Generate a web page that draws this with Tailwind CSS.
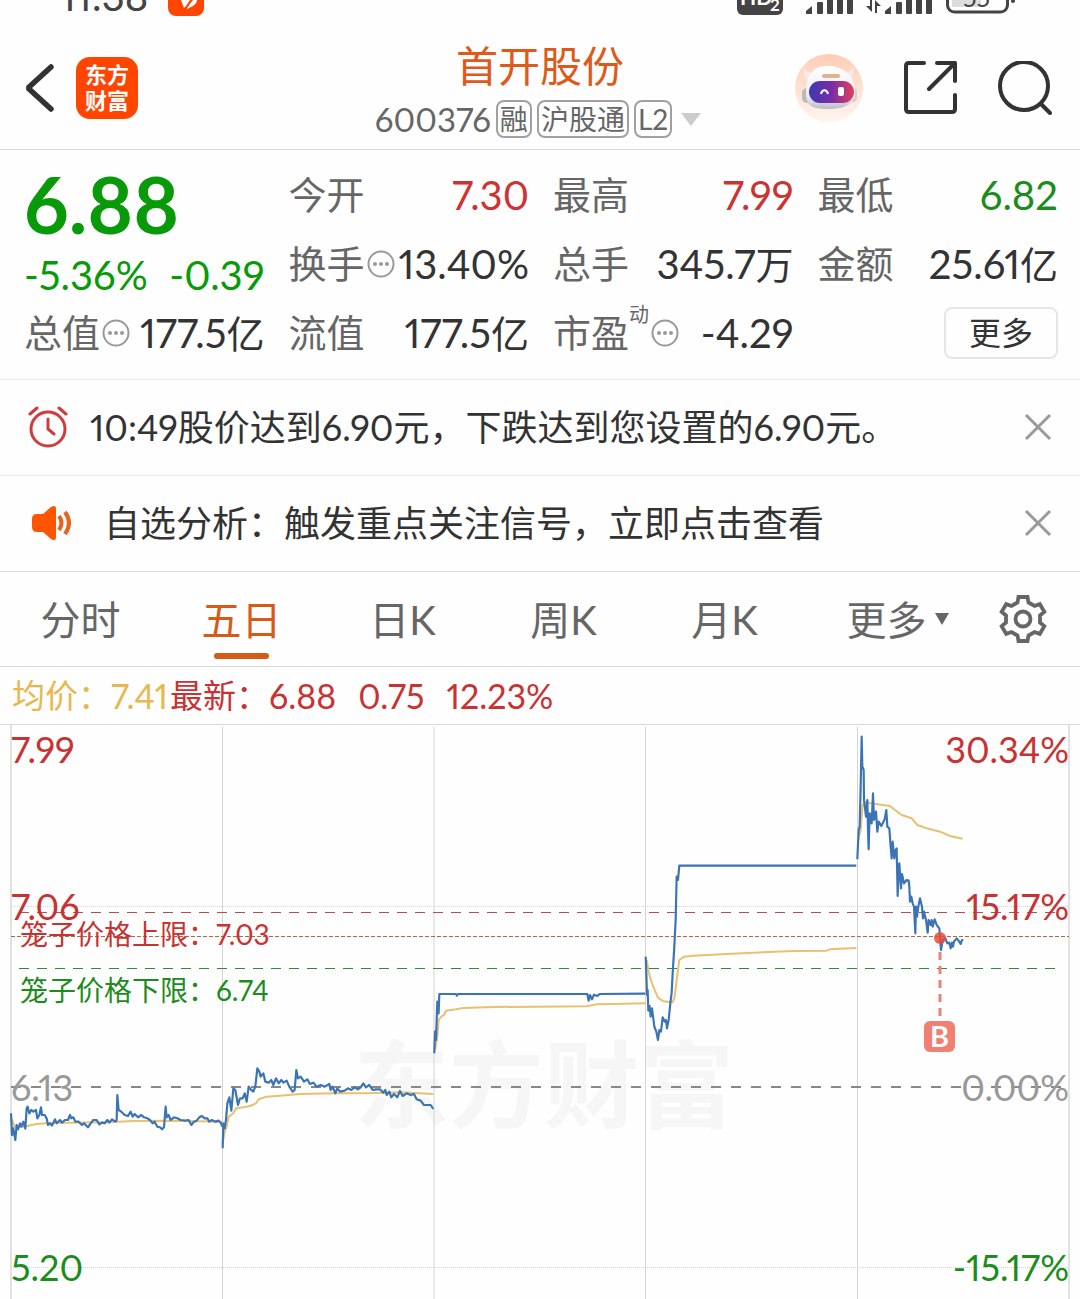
<!DOCTYPE html>
<html lang="zh-CN">
<head>
<meta charset="utf-8">
<meta name="viewport" content="width=device-width, initial-scale=1">
<title>首开股份 600376</title>
<script src="https://cdn.jsdelivr.net/npm/@tailwindcss/browser@4"></script>
</head>
<body class="bg-[#fefefe] text-[#333] font-['Lato','Noto_Sans_CJK_SC',sans-serif] proportional-nums overflow-x-hidden">

<!-- Status bar -->
<div class="h-6 overflow-hidden flex justify-between items-start pl-15 pr-16 text-[#444]">
  <div class="flex items-start gap-5">
    <span class="text-[40px] leading-10 h-4 flex items-end">11:38</span>
    <svg class="w-9 h-4" viewBox="0 0 36 16" aria-hidden="true"><rect y="-20" width="36" height="36" rx="8" fill="#ff4500"/><path d="M13 0h9l-4 6-2 2zM19 8l6-8h4q0 3-4 6l-6 3z" fill="#fff"/></svg>
  </div>
  <svg class="w-[279px] h-4 shrink-0" viewBox="737 0 279 16" aria-hidden="true">
    <rect x="737" y="-20" width="46" height="35" rx="6" fill="#444"/>
    <text x="740" y="5" font-size="21" font-weight="700" fill="#fff">HD</text><text x="770" y="11" font-size="17" font-weight="700" fill="#fff">2</text>
    <g fill="#444"><path d="M806 14v-3l6-5v8z"/><rect x="817" y="2" width="6" height="12" rx="1"/><rect x="827" y="-3" width="6" height="17" rx="1"/><rect x="837" y="-3" width="6" height="17" rx="1"/><rect x="847" y="-3" width="6" height="17" rx="1"/>
    <path d="M866 6h4V-3h2v15zM881 6h-4v7h-2V0z"/>
    <path d="M885 14v-3l6-5v8z"/><rect x="896" y="2" width="6" height="12" rx="1"/><rect x="906" y="-3" width="6" height="17" rx="1"/><rect x="916" y="-3" width="6" height="17" rx="1"/><rect x="926" y="-3" width="6" height="17" rx="1"/><circle cx="1013" cy="1" r="2"/></g>
    <rect x="952" y="-10" width="29" height="17" fill="#ddd"/>
    <rect x="947.500" y="-20" width="60" height="32" rx="7" fill="none" stroke="#444" stroke-width="3"/>
    <text x="963" y="7" font-size="25" fill="#444">55</text>
  </svg>
</div>

<!-- Title bar -->
<header class="h-[126px] border-b border-[#d8d8d8] grid grid-cols-[1fr_auto_1fr] px-6">
  <div class="flex items-center gap-5 pt-0.5">
    <button type="button" aria-label="返回" class="w-8 h-12"><svg class="w-8 h-12" viewBox="0 0 32 48" fill="none" stroke="#333" stroke-width="5.500" stroke-linecap="round" stroke-linejoin="bevel"><path d="M27 3L4 24l23 21"/></svg></button>
    <a href="#" class="w-[62px] h-[62px] rounded-[14px] bg-[#ff4500] text-white font-bold text-[22px] leading-[26px] flex flex-col items-center justify-center"><span>东方</span><span>财富</span></a>
  </div>
  <div class="pt-4 flex flex-col items-center gap-[7px]">
    <h1 class="text-[42px] leading-[52px] text-[#dd5a1a]">首开股份</h1>
    <button type="button" class="flex items-center gap-[5px] text-[28px] leading-[34px] text-[#666] h-10 pr-1">
      <span class="text-[33px]">600376</span>
      <span class="border-2 border-[#a0a0a0] rounded-lg px-[2px]">融</span>
      <span class="border-2 border-[#a0a0a0] rounded-lg px-[2px]">沪股通</span>
      <span class="border-2 border-[#a0a0a0] rounded-lg px-[2px]">L2</span>
      <svg class="w-5 h-[13px] ml-1" viewBox="0 0 20 13"><path d="M0 0h20L10 13z" fill="#ccc"/></svg>
    </button>
  </div>
  <div class="flex items-center justify-end gap-[41px] pt-0.5 pr-1">
    <button type="button" aria-label="智能助手" class="w-[68px] h-[68px]">
      <svg class="w-[68px] h-[68px]" viewBox="0 0 68 68">
        <defs><linearGradient id="bg" x2="0" y2="1"><stop stop-color="#ffcdb5"/><stop offset="1" stop-color="#fff5f0"/></linearGradient><linearGradient id="visor"><stop stop-color="#3a3bb0"/><stop offset=".5" stop-color="#7b2ba8"/><stop offset="1" stop-color="#e0405c"/></linearGradient><linearGradient id="shell" x2="0" y2="1"><stop stop-color="#fff"/><stop offset=".7" stop-color="#eeecef"/><stop offset="1" stop-color="#b9bcc8"/></linearGradient></defs>
        <circle cx="34" cy="34" r="34" fill="url(#bg)"/>
        <path d="M9 13c-1 6 0 11 5 14l6-7c-6 0-9-3-11-7zM58 13c1 6 0 11-5 14l-6-7c6 0 9-3 11-7z" fill="#f3ecea"/>
        <rect x="7" y="34" width="10" height="15" rx="5" fill="#b9b9c0"/><rect x="53" y="34" width="9" height="14" rx="4" fill="#d5d0d3"/>
        <path d="M11 38c0-17 7-26 21-26s27 7 28 25c0 12-8 18-27 18S11 50 11 38z" fill="url(#shell)"/>
        <rect x="27" y="20" width="18" height="4" rx="2" fill="#e0b090"/>
        <rect x="14" y="27" width="45" height="22" rx="11" fill="url(#visor)"/>
        <path d="M26 40c1-5 6-5 7 0" fill="none" stroke="#fff" stroke-width="2"/><rect x="43" y="33" width="6" height="9" rx="2" fill="#fff"/>
      </svg>
    </button>
    <button type="button" aria-label="分享" class="w-[53px] h-[53px]"><svg class="w-[53px] h-[53px]" viewBox="0 0 53 53" fill="none" stroke="#333" stroke-width="4" stroke-linecap="round" stroke-linejoin="round"><path d="M20 2H5q-3 0-3 3v43q0 3 3 3h43q3 0 3-3V34M33 2h18v18M51 2L25 28"/></svg></button>
    <button type="button" aria-label="搜索" class="w-[54px] h-[54px]"><svg class="w-[54px] h-[54px]" viewBox="0 0 54 54" fill="none" stroke="#333" stroke-width="4" stroke-linecap="round"><circle cx="26" cy="25" r="24"/><path d="M43 43l9 9"/></svg></button>
  </div>
</header>

<!-- Quote figures -->
<section class="pt-[10px] pb-3 pl-6 pr-[22px] border-b border-[#ececec] grid grid-cols-4 gap-x-6 auto-rows-[69px] text-[40px] text-[#333] whitespace-nowrap">
  <div class="row-span-2 text-[#089a08]">
    <p class="text-[78px] leading-[88px] font-bold">6.88</p>
    <p class="leading-[46px] pt-1 flex justify-between"><span>-5.36%</span><span>-0.39</span></p>
  </div>
  <div class="flex items-center justify-between"><span class="text-[#666] text-[38px]">今开</span><span class="text-[#cc3333]">7.30</span></div>
  <div class="flex items-center justify-between"><span class="text-[#666] text-[38px]">最高</span><span class="text-[#cc3333]">7.99</span></div>
  <div class="flex items-center justify-between"><span class="text-[#666] text-[38px]">最低</span><span class="text-[#1c8c1c]">6.82</span></div>
  <div class="flex items-center justify-between"><span class="text-[#666] text-[38px] flex items-center">换手<svg class="w-7 h-7 ml-[2px]" viewBox="0 0 28 28"><circle cx="14" cy="14" r="12.500" fill="none" stroke="#999" stroke-width="2"/><g fill="#999"><circle cx="8" cy="14" r="2"/><circle cx="14" cy="14" r="2"/><circle cx="20" cy="14" r="2"/></g></svg></span><span>13.40%</span></div>
  <div class="flex items-center justify-between"><span class="text-[#666] text-[38px]">总手</span><span>345.7<span class="text-[38px]">万</span></span></div>
  <div class="flex items-center justify-between"><span class="text-[#666] text-[38px]">金额</span><span>25.61<span class="text-[38px]">亿</span></span></div>
  <div class="flex items-center justify-between"><span class="text-[#666] text-[38px] flex items-center">总值<svg class="w-7 h-7 ml-[2px]" viewBox="0 0 28 28"><circle cx="14" cy="14" r="12.500" fill="none" stroke="#999" stroke-width="2"/><g fill="#999"><circle cx="8" cy="14" r="2"/><circle cx="14" cy="14" r="2"/><circle cx="20" cy="14" r="2"/></g></svg></span><span>177.5<span class="text-[38px]">亿</span></span></div>
  <div class="flex items-center justify-between"><span class="text-[#666] text-[38px]">流值</span><span>177.5<span class="text-[38px]">亿</span></span></div>
  <div class="flex items-center justify-between"><span class="text-[#666] text-[38px] flex items-center">市盈<span class="text-[20px] leading-5 self-start">动</span><svg class="w-7 h-7 ml-[2px]" viewBox="0 0 28 28"><circle cx="14" cy="14" r="12.500" fill="none" stroke="#999" stroke-width="2"/><g fill="#999"><circle cx="8" cy="14" r="2"/><circle cx="14" cy="14" r="2"/><circle cx="20" cy="14" r="2"/></g></svg></span><span>-4.29</span></div>
  <div class="flex items-center justify-end"><button type="button" class="w-[114px] h-[52px] border-2 border-[#e6e6e6] rounded-lg text-[32px] leading-[46px]">更多</button></div>
</section>

<!-- Alerts -->
<div class="h-24 border-b border-[#ececec] flex items-center pl-7 pr-7 pb-0.5 text-[36px]">
  <svg class="w-10 h-[42px] shrink-0" viewBox="0 0 40 42" fill="none" stroke="#d03c3c" stroke-width="3" stroke-linecap="round"><circle cx="20" cy="23" r="17"/><path d="M20 13v10l6 5M2 8l7-6M38 8l-7-6"/></svg>
  <p class="flex-1 pl-[22px] whitespace-nowrap">10:49股价达到6.90元，下跌达到您设置的6.90元。</p>
  <button type="button" aria-label="关闭提醒" class="w-7 h-7 shrink-0"><svg class="w-7 h-7" viewBox="0 0 28 28" stroke="#999" stroke-width="3"><path d="M2 2l24 24M26 2L2 26"/></svg></button>
</div>
<div class="h-24 border-b border-[#d8d8d8] flex items-center pl-8 pr-7 pb-0.5 text-[36px]">
  <svg class="w-10 h-9 shrink-0" viewBox="0 0 40 36"><path d="M5 9h6l8-7q5-3 5 2v28q0 5-5 2l-8-7H5q-5 0-5-5v-8q0-5 5-5z" fill="#ff5500"/><path d="M27 11q5 7 0 14M33 7q8 11 0 22" fill="none" stroke="#e8641c" stroke-width="4"/></svg>
  <p class="flex-1 pl-8 whitespace-nowrap">自选分析：触发重点关注信号，立即点击查看</p>
  <button type="button" aria-label="关闭分析" class="w-7 h-7 shrink-0"><svg class="w-7 h-7" viewBox="0 0 28 28" stroke="#999" stroke-width="3"><path d="M2 2l24 24M26 2L2 26"/></svg></button>
</div>

<!-- Period tabs -->
<div class="h-[95px] border-b border-[#d8d8d8] flex text-[40px] leading-[66px] text-[#666]">
  <nav class="flex-1 grid grid-cols-6 pt-[15px] text-center">
    <a href="#">分时</a>
    <a href="#" aria-current="page" class="text-[#d65a18] flex flex-col items-center">五日<span class="w-[55px] h-1.5 rounded-full bg-[#d65a18]"></span></a>
    <a href="#">日K</a>
    <a href="#">周K</a>
    <a href="#">月K</a>
    <a href="#" class="flex items-start justify-center pl-6">更多<svg class="w-3.5 h-[66px] ml-2" viewBox="0 0 14 66"><path d="M0 26h14L7 38z" fill="#666"/></svg></a>
  </nav>
  <button type="button" aria-label="设置" class="w-[114px] flex items-center justify-center"><svg class="w-12 h-12" viewBox="-24 -24 48 48" fill="none" stroke="#666" stroke-width="3.800"><path d="M-5.500-16.500L-4.500-22H4.500L5.500-16.500 11.500-13 16.800-14.900 21.300-7.100 17-3.500V3.500L21.300 7.100 16.800 14.900 11.500 13 5.500 16.500 4.500 22H-4.500L-5.500 16.500-11.500 13-16.800 14.900-21.300 7.100-17 3.500V-3.500L-21.300-7.100-16.800-14.900-11.500-13z"/><circle r="7.500"/></svg></button>
</div>

<!-- Chart summary -->
<div class="h-[58px] border-b border-[#d8d8d8] flex items-center pl-3 text-[34px] text-[#c83232] whitespace-nowrap">
  <span class="text-[#e8b850] flex items-center"><span class="text-[33px]">均价：</span>7.41</span>
  <span class="flex items-center ml-[2px]"><span class="text-[33px]">最新：</span>6.88</span>
  <span class="ml-[22px]">0.75</span>
  <span class="ml-[22px]">12.23%</span>
</div>

<!-- Five-day chart -->
<svg class="block w-full" viewBox="0 725 1080 574" role="img" aria-label="五日走势图">
  <text x="354" y="1121" font-size="95" font-weight="700" fill="#f6f6f6">东方财富</text>
  <g stroke="#d4d4d4"><path d="M222.500 727V1299M434 727V1299M645.500 727V1299M857.500 727V1299"/><path d="M11 725V1299M1069 725V1299" stroke="#e2e2e2" stroke-width="2"/><path d="M11 906.500H1069M11 1267.500H1069" stroke-dasharray="1 1"/></g>
  <path d="M19 912.500H1055" stroke="#b05050" stroke-dasharray="10 8"/>
  <path d="M11 936.500H1069" stroke="#b0683c" stroke-dasharray="4 2"/>
  <path d="M19 968.500H1055" stroke="#2e8b3a" stroke-dasharray="10 8"/>
  <path d="M11 1087H1069" stroke="#888" stroke-width="2" stroke-dasharray="10 10"/>
  <!-- average price -->
  <g fill="none" stroke="#e8c070" stroke-width="6" stroke-linejoin="round">
    <g transform="translate(0 1030) scale(.3333)"><polyline points="34,265 44,290 70,290 110,282 150,279 340,276 400,273 520,272 667,275"/></g>
    <g transform="translate(200 890) scale(.3333)"><polyline points="68,760 74,725 80,710 86,680 100,670 108,655 130,652 150,648 168,640 176,628 200,620 240,617 300,612 400,610 500,610 600,607 700,612"/><polyline points="705,480 712,440 716,390 724,380 732,375 738,362 768,358 790,354 880,351 1160,349 1190,343 1240,342 1337,340"/></g>
    <g transform="translate(560 840) scale(.3333)"><polyline points="260,360 266,395 274,425 282,445 294,473 310,484 338,487 344,470 350,420 358,360 372,350 400,347 500,342 580,338 700,333 800,332 810,328 889,324"/></g>
    <g transform="translate(840 720) scale(.3333)"><polyline points="54,360 62,330 68,255 80,245 90,250 150,258 165,270 185,285 215,295 232,315 260,325 300,335 330,348 368,356"/></g>
  </g>
  <!-- price -->
  <g fill="none" stroke="#3a74b4" stroke-width="6.500" stroke-linejoin="round">
    <g transform="translate(0 1030) scale(.3333)"><polyline points="33,250 36,315 40,295 46,330 50,285 54,298 60,280 64,290 70,275 76,296 80,235 83,230 88,250 94,240 100,245 108,240 112,265 118,255 123,232 126,255 134,255 140,265 144,285 150,280 156,287 165,268 170,280 180,270 186,278 195,270 204,270 210,255 214,265 220,262 226,275 236,275 246,285 252,280 264,292 272,280 280,270 290,270 298,283 306,278 314,280 322,270 328,278 336,268 346,275 350,270 352,195 356,240 364,245 374,255 384,258 392,245 398,260 404,252 414,262 424,255 432,262 442,265 450,270 458,280 464,275 472,290 480,292 486,298 492,292 497,230 500,262 506,255 512,270 522,262 532,265 542,270 556,272 566,270 574,285 582,275 590,272 598,262 606,258 614,265 622,265 628,275 636,270 646,275 656,272 662,278 667,290"/></g>
    <g transform="translate(200 890) scale(.3333)"><polyline points="68,775 70,700 74,715 78,690 82,640 88,622 94,662 100,595 106,600 114,645 120,625 128,625 134,610 140,635 146,590 152,598 160,605 166,590 172,535 178,545 182,560 190,550 196,575 206,578 214,570 220,585 228,565 236,580 244,570 250,578 260,572 268,590 278,605 284,600 289,540 294,565 302,560 312,575 322,568 330,582 340,578 350,590 362,585 374,590 388,582 392,600 398,590 406,610 412,595 420,605 434,602 444,595 454,600 464,592 474,598 482,592 490,580 498,592 508,585 518,600 528,598 540,598 550,608 556,600 560,615 568,605 574,622 582,612 592,622 600,603 608,618 620,610 632,615 642,612 650,628 662,632 672,645 682,645 692,645 700,657"/><polyline points="703,490 705,425 708,450 712,335 716,370 718,312 768,312 771,317 774,312 1162,312 1166,332 1170,315 1176,328 1182,314 1192,318 1200,312 1336,311"/></g>
    <g transform="translate(560 840) scale(.3333)"><polyline points="257,350 259,400 261,465 263,450 265,512 269,498 272,530 276,505 279,528 283,560 289,575 294,600 298,570 303,575 308,532 314,545 318,540 321,565 326,540 331,490 335,458 338,400 343,320 347,240 350,110 354,120 358,77 889,77"/></g>
    <g transform="translate(840 720) scale(.3333)"><polyline points="52,418 56,330 59,320 62,200 65,50 67,140 71,150 72,240 78,290 82,240 84,330 86,388 89,280 95,310 99,220 102,300 108,275 112,335 116,305 124,318 134,298 139,270 142,320 148,325 152,380 155,415 158,365 163,415 167,390 170,385 173,528 175,470 178,430 183,505 186,462 192,490 200,480 206,482 208,500 210,545 214,530 218,550 222,560 226,640 228,560 231,590 235,560 240,535 246,560 249,595 252,575 258,600 263,638 266,600 272,615 275,600 278,620 284,598 290,615 298,625 300,650 303,690 308,660 316,655 322,670 328,668 332,685 336,668 339,680 342,665 350,655 358,665 362,672 366,660 370,660"/></g>
  </g>
  <!-- buy marker -->
  <path d="M940 952V1016" stroke="#e8847c" stroke-width="3" stroke-dasharray="8 6"/>
  <circle cx="940" cy="938" r="6" fill="#e84c3d" fill-opacity=".85"/>
  <rect x="924" y="1021" width="31" height="31" rx="6" fill="#f28072"/>
  <text x="939.500" y="1047" font-size="29" font-weight="700" fill="#fff" text-anchor="middle">B</text>
  <!-- axis labels -->
  <g font-size="36">
    <g fill="#c83232"><text x="11" y="763">7.99</text><text x="11" y="920">7.06</text></g>
    <text x="11" y="1101" fill="#999">6.13</text><text x="11" y="1281" fill="#1c8c1c">5.20</text>
    <g text-anchor="end"><text x="1069" y="763" fill="#c83232">30.34%</text><text x="1069" y="920" fill="#c83232">15.17%</text><text x="1069" y="1101" fill="#999">0.00%</text><text x="1069" y="1281" fill="#1c8c1c">-15.17%</text></g>
  </g>
  <g font-size="28"><text x="20" y="945" fill="#c83232">笼子价格上限：7.03</text><text x="20" y="1001" fill="#1c8c1c">笼子价格下限：6.74</text></g>
</svg>
</body>
</html>
